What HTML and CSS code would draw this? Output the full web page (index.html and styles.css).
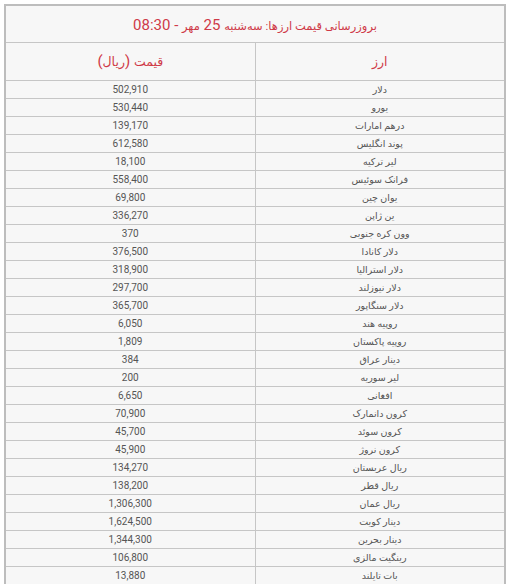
FILE: index.html
```html
<!DOCTYPE html>
<html lang="fa" dir="rtl">
<head>
<meta charset="utf-8">
<link rel="stylesheet" href="styles.css">
</head>
<body>
<div class="wrap">
<table class="rates">
<thead>
<tr class="title-row"><th colspan="2"><span class="fa">بروزرسانی قیمت ارزها: سه‌شنبه</span> 25 <span class="fa">مهر</span> - 08:30</th></tr>
<tr class="head-row"><th>ارز</th><th><span class="fa">قیمت</span> (<span class="fa">ریال</span>)</th></tr>
</thead>
<tbody>
<tr><td>دلار</td><td>502,910</td></tr>
<tr><td>یورو</td><td>530,440</td></tr>
<tr><td>درهم امارات</td><td>139,170</td></tr>
<tr><td>پوند انگلیس</td><td>612,580</td></tr>
<tr><td>لیر ترکیه</td><td>18,100</td></tr>
<tr><td>فرانک سوئیس</td><td>558,400</td></tr>
<tr><td>یوان چین</td><td>69,800</td></tr>
<tr><td>ین ژاپن</td><td>336,270</td></tr>
<tr><td>وون کره جنوبی</td><td>370</td></tr>
<tr><td>دلار کانادا</td><td>376,500</td></tr>
<tr><td>دلار استرالیا</td><td>318,900</td></tr>
<tr><td>دلار نیوزلند</td><td>297,700</td></tr>
<tr><td>دلار سنگاپور</td><td>365,700</td></tr>
<tr><td>روپیه هند</td><td>6,050</td></tr>
<tr><td>روپیه پاکستان</td><td>1,809</td></tr>
<tr><td>دینار عراق</td><td>384</td></tr>
<tr><td>لیر سوریه</td><td>200</td></tr>
<tr><td>افغانی</td><td>6,650</td></tr>
<tr><td>کرون دانمارک</td><td>70,900</td></tr>
<tr><td>کرون سوئد</td><td>45,700</td></tr>
<tr><td>کرون نروژ</td><td>45,900</td></tr>
<tr><td>ریال عربستان</td><td>134,270</td></tr>
<tr><td>ریال قطر</td><td>138,200</td></tr>
<tr><td>ریال عمان</td><td>1,306,300</td></tr>
<tr><td>دینار کویت</td><td>1,624,500</td></tr>
<tr><td>دینار بحرین</td><td>1,344,300</td></tr>
<tr><td>رینگیت مالزی</td><td>106,800</td></tr>
<tr><td>بات تایلند</td><td>13,880</td></tr>
</tbody>
</table>
</div>
</body>
</html>
```
FILE: styles.css
```css
html, body {
  margin: 0;
  padding: 0;
  background: #ffffff;
}
.wrap {
  padding: 4px 3px 0 4px;
}
.rates {
  width: 502px;
  border-collapse: collapse;
  table-layout: fixed;
  font-family: Roboto, "DejaVu Sans", sans-serif;
  background: #f7f7f7;
  border: 2px solid #bdbdbd;
}
.rates th,
.rates td {
  border: 1px solid #c6c6c6;
  padding: 0;
  text-align: center;
  vertical-align: middle;
}
.title-row th {
  height: 33px;
  padding-top: 3px;
  line-height: 20px;
  color: #cf3a48;
  font-size: 15px;
  font-weight: normal;
}
.title-row .fa {
  font-size: 11.5px;
}
.head-row th {
  height: 37px;
  width: 50%;
  line-height: 20px;
  color: #cf3a48;
  font-size: 15px;
  font-weight: normal;
}
.head-row .fa,
.head-row th:first-child {
  font-size: 12.5px;
}
.rates td {
  height: 17px;
  font-size: 10px;
  color: #555555;
  line-height: 17px;
}
.rates td:first-child {
  font-size: 9.5px;
}
```
